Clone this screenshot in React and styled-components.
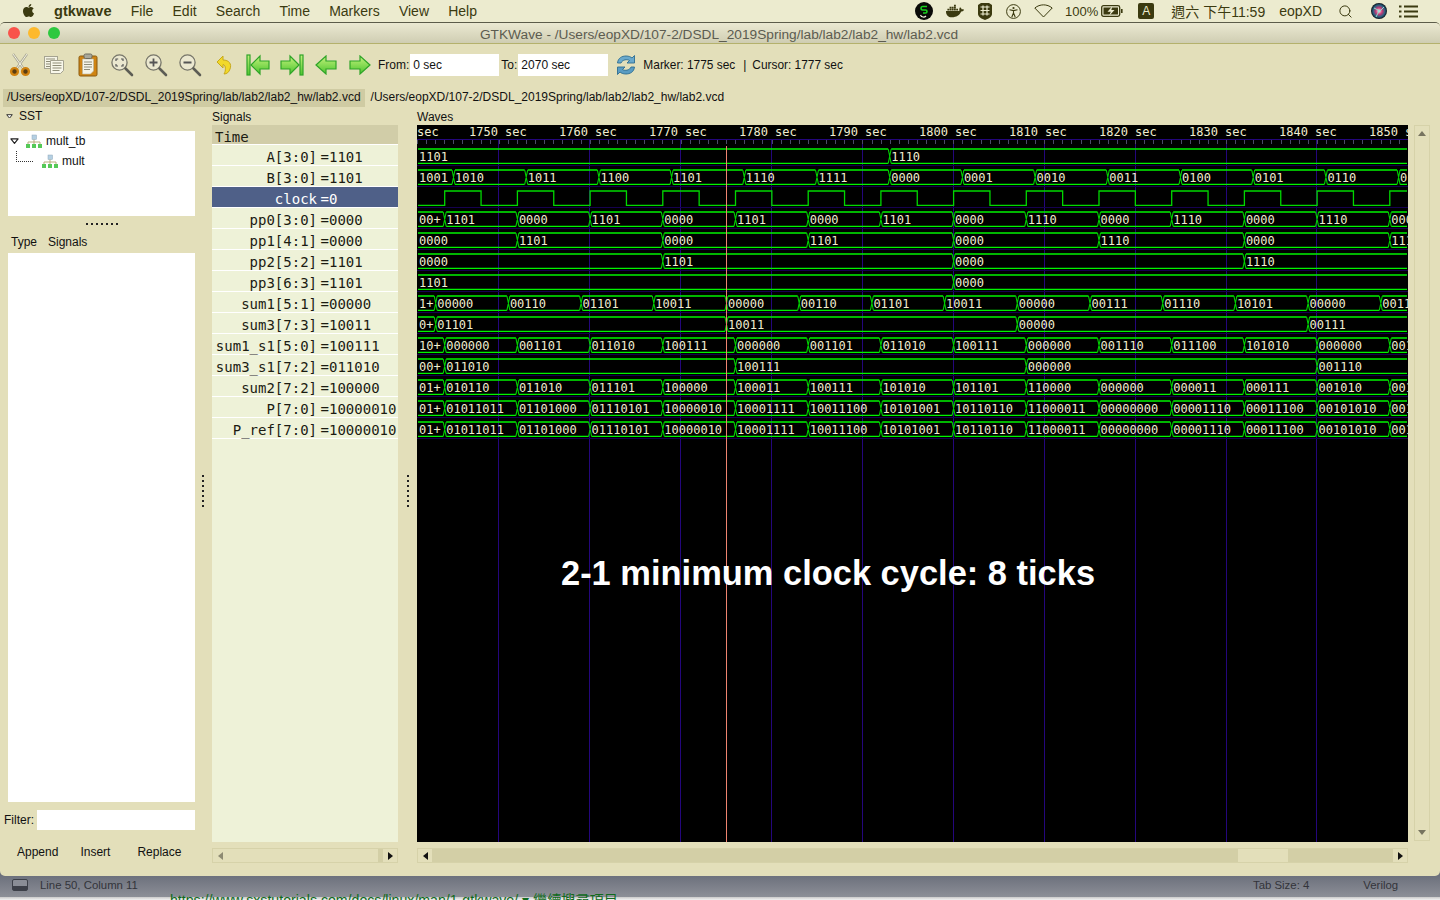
import React from 'react';
import styled, { createGlobalStyle } from 'styled-components';
import { FaApple, FaDocker } from 'react-icons/fa';
import { Search } from 'lucide-react';

const Global = createGlobalStyle`
  html, body { margin: 0; padding: 0; background: #8a8d96; }
  * { box-sizing: border-box; }
`;
const SANS = `"Liberation Sans", Arial, "Noto Sans CJK TC", sans-serif`;
const MONO = `"DejaVu Sans Mono", "Liberation Mono", monospace`;

const Screen = styled.div`
  width: 1440px; height: 900px; overflow: hidden; position: relative;
  display: flex; flex-direction: column; font-family: ${SANS}; color: #111;
  background: #ecebd0;
`;
const MenuBar = styled.div`
  height: 22px; flex: none; display: flex; align-items: center; padding-left: 21px;
  padding-right: 22px; background: #ecebcf; color: #3b3a10; font-size: 14px;
`;
const AppleMark = styled.span`display: flex; width: 33px; font-size: 15px; margin-top: -2px;`;
const MenuList = styled.div`display: flex; gap: 19.2px; align-items: center;`;
const MenuName = styled.span`font-weight: bold; font-size: 14.6px;`;
const Tray = styled.div`margin-left: auto; display: flex; align-items: center;`;
const TrayItem = styled.span`
  display: flex; align-items: center; margin-left: ${p => p.$ml || 0}px;
  font-size: ${p => p.$size || 14}px; white-space: nowrap; font-weight: ${p => p.$bold ? 500 : 400};
`;
const KeyBox = styled.span`
  width: 16px; height: 16px; border-radius: 2px; background: #3b3a10; color: #ecebcf;
  font-size: 12px; display: flex; align-items: center; justify-content: center; margin-left: 15px;
`;

const Window = styled.div`
  flex: none; height: 854px; position: relative; z-index: 1; display: flex; flex-direction: column;
  background: #e3dfba; border-radius: 5px; border-top: 1px solid #5c5c4a; overflow: hidden;
`;
const TitleBar = styled.div`
  height: 21px; flex: none; display: flex; align-items: center; position: relative; justify-content: center;
  background: linear-gradient(#ebe9d2, #cfcdb2); border-bottom: 1px solid #b4b16c;
  color: #5c5c50; font-size: 13.7px; padding: 2px 2px 0 0;
`;
const Lights = styled.div`position: absolute; left: 8px; top: 4px; display: flex; gap: 8px;`;
const Light = styled.span`width: 12px; height: 12px; border-radius: 50%; background: ${p => p.$c};`;

const Toolbar = styled.div`
  height: 42px; flex: none; display: flex; align-items: center; padding-left: 3px; font-size: 12px;
`;
const ToolBtn = styled.div`width: 34px; height: 24px; display: flex; align-items: center; justify-content: center;`;
const ToolLabel = styled.span`margin-left: ${p => p.$ml || 0}px; white-space: nowrap; display: flex; align-items: center;`;
const MarkerText = styled(ToolLabel)`font-size: 11.9px;`;
const TimeField = styled.div`
  width: ${p => p.$w}px; height: 22px; background: #fff; margin-left: ${p => p.$ml || 0}px;
  padding-left: 3px; display: flex; align-items: center;
`;
const TabRow = styled.div`height: 18px; margin-top: 3px; flex: none; display: flex; padding-left: 3px; font-size: 12px;`;
const Tab = styled.div`
  padding: 0 4px; height: 18px; line-height: 17px; margin-right: 2px; background: ${p => p.$on ? '#cfcba3' : 'transparent'};
`;

const Panes = styled.div`flex: 1; min-height: 0; display: grid; grid-template-columns: 198px 14px 186px 19px 991px 32px;`;
const LeftPane = styled.div`display: flex; flex-direction: column; min-height: 0; font-size: 12px;`;
const SstHead = styled.div`height: 24px; flex: none; display: flex; align-items: center; padding: 0 0 6px 6px; gap: 6px;`;
const TreeBox = styled.div`height: 85px; flex: none; margin-left: 8px; width: 187px; background: #fff;`;
const TreeRow = styled.div`
  height: 20px; display: flex; align-items: center; gap: 4px; padding-left: ${p => p.$indent}px;
`;
const TreeTwist = styled.span`display: flex; margin-right: 3px;`;
const TreeElbow = styled.span`
  width: 17px; height: 11px; margin-top: -9px; margin-right: 5px; flex: none;
  border-left: 1px dotted #333; border-bottom: 1px dotted #333;
`;
const GripRow = styled.div`height: 15px; flex: none; display: flex; justify-content: center; align-items: center; padding-left: 7px;`;
const HGrip = styled.span`
  width: 33px; height: 2px; background: repeating-linear-gradient(90deg, #222 0 2px, transparent 2px 5px);
`;
const TypeHead = styled.div`height: 22px; flex: none; display: flex; align-items: center; padding-left: 11px; gap: 11px;`;
const TypeList = styled.div`flex: 1; margin-left: 8px; width: 187px; background: #fff;`;
const FilterRow = styled.div`height: 20px; margin-top: 8px; flex: none; display: flex; align-items: center; padding-left: 4px;`;
const FilterInput = styled.div`width: 158px; height: 20px; margin-left: 3px; background: #fff;`;
const ActionRow = styled.div`height: 46px; flex: none; display: flex; align-items: center; padding-bottom: 2px; padding-left: 17px;`;
const ActionBtn = styled.span`margin-right: ${p => p.$mr}px;`;

const VHandle = styled.div`
  display: flex; align-items: center; justify-content: center;
  padding-left: ${p => p.$pl || 0}px; padding-right: ${p => p.$pr || 0}px;
`;
const VGrip = styled.span`
  width: 2px; height: 33px; background: repeating-linear-gradient(180deg, #222 0 2px, transparent 2px 5px);
`;
const Column = styled.div`display: flex; flex-direction: column; min-height: 0; min-width: 0;`;
const PaneTitle = styled.div`height: 18px; flex: none; display: flex; align-items: center; font-size: 12px; padding-top: 1px;`;
const SignalList = styled.div`flex: 1; min-height: 0; background: #eef2d8; font-family: ${MONO}; font-size: 14px; color: #1b1b12;`;
const TimeHead = styled.div`height: 20px; background: #d1cda8; border-bottom: 1px solid #fff; padding: 2px 0 0 3px; line-height: 20px;`;
const SignalRow = styled.div`
  height: 21px; border-bottom: 1px solid #fff; display: flex; padding-top: 2px; line-height: 21px; white-space: pre;
  background: ${p => p.$sel ? '#4f6088' : 'transparent'}; color: ${p => p.$sel ? '#fff' : 'inherit'};
`;
const SigName = styled.span`width: 105px; text-align: right; flex: none;`;
const SigEq = styled.span`width: 12px; text-align: right; flex: none;`;
const SigVal = styled.span`margin-left: 0;`;

const HScroll = styled.div`
  height: 15px; margin: 6px 0 13px; flex: none; display: flex; align-items: stretch;
  border: 1px solid #d6d2a9; background: #d3cfa6;
`;
const ArrowBtn = styled.span`
  width: 14px; flex: none; background: #e3dfba; display: flex; align-items: center; justify-content: center;
`;
const ArrowGlyph = styled.span`
  width: 0; height: 0; border-top: 4px solid transparent; border-bottom: 4px solid transparent;
  ${p => p.$left ? `border-right: 5px solid ${p.$c};` : `border-left: 5px solid ${p.$c};`}
`;
const ScrollGap = styled.span`flex: ${p => p.$grow ? 1 : 'none'}; width: ${p => p.$w || 0}px;`;
const Thumb = styled.span`background: #e3dfba; flex: ${p => p.$grow ? 1 : 'none'}; width: ${p => p.$w || 0}px;`;

const WaveBox = styled.div`flex: 1; min-height: 0; position: relative; background: #000; overflow: hidden;`;
const WaveSvg = styled.svg`display: block; font-family: ${MONO}; font-size: 12px;`;
const Caption = styled.div`
  position: absolute; left: 144px; top: 428px; color: #fff; font: bold 34.45px/40px ${SANS}; white-space: nowrap;
`;
const VScrollCol = styled.div`display: flex; flex-direction: column; padding: 18px 0 35px 6px;`;
const VScroll = styled.div`
  width: 16px; flex: 1; border: 1px solid #d6d2a9; display: flex; flex-direction: column;
  align-items: center; justify-content: space-between; padding: 5px 0;
`;
const VArrow = styled.span`
  width: 0; height: 0; border-left: 4px solid transparent; border-right: 4px solid transparent;
  ${p => p.$up ? 'border-bottom: 5px solid #77745f;' : 'border-top: 5px solid #77745f;'}
`;
const StatusBar = styled.div`
  height: 27px; margin-top: -6px; padding: 3px 0 0 12px; flex: none; display: flex; align-items: center;
  background: linear-gradient(#646875, #8c8f97); color: #33343a; font-size: 11.4px;
`;
const StatusIcon = styled.span`
  width: 16px; height: 12px; border: 1px solid #3d4049; border-radius: 2px; flex: none; margin-right: 12px;
  background: linear-gradient(#8a8d96 65%, #3d4049 65%);
`;
const StatusRight = styled.span`margin-left: ${p => p.$ml}px; white-space: nowrap;`;
const BehindStrip = styled.div`flex: 1; background: linear-gradient(#c9c9c9, #f2f2f2);`;
const BehindLink = styled.div`
  position: absolute; left: 170px; top: 889px; z-index: 2; font-size: 14.15px; color: #0f6a1c; white-space: nowrap;
`;

/* ---------- icons ---------- */
const Twist = ({ w }) => (
  <svg width={w} height={w * 0.7} viewBox="0 0 10 7">
    <path d="M1 1 H9 L5 6 Z" fill="#fff" stroke="#222" strokeWidth="1.3" strokeLinejoin="round" />
  </svg>
);
const Scissors = () => (
  <svg width="22" height="24" viewBox="0 0 22 24">
    <path d="M4 1 L14 15 M18 1 L8 15" stroke="#a9a793" strokeWidth="2.4" fill="none" />
    <path d="M4 1 L14 15 M18 1 L8 15" stroke="#f3f1e2" strokeWidth="1" fill="none" />
    <circle cx="5.5" cy="18.5" r="3.4" fill="#5a3d10" stroke="#d0820f" strokeWidth="2.4" />
    <circle cx="16.5" cy="18.5" r="3.4" fill="#5a3d10" stroke="#d0820f" strokeWidth="2.4" />
  </svg>
);
const DocLines = ({ x, y, w }) => (
  <path d={`M${x} ${y}h${w}M${x} ${y + 2.5}h${w}M${x} ${y + 5}h${w}M${x} ${y + 7.5}h${w - 2}`} stroke="#8f8d78" strokeWidth="1" />
);
const Copy = () => (
  <svg width="22" height="20" viewBox="0 0 22 20">
    <rect x="1.5" y="1.5" width="13" height="12" fill="#f5f4e6" stroke="#a5a391" />
    <DocLines x={3} y={4} w={9} />
    <path d="M7.5 5.5h13v10l-3 3h-10z" fill="#f8f7ea" stroke="#a5a391" />
    <DocLines x={9.5} y={8} w={9} />
  </svg>
);
const Paste = () => (
  <svg width="20" height="24" viewBox="0 0 20 24">
    <rect x="1" y="3" width="18" height="20" rx="1.5" fill="#cf8413" stroke="#8a5a10" />
    <path d="M4.5 6h11v12l-3 3h-8z" fill="#f5f4e8" stroke="#b8b6a0" strokeWidth=".6" />
    <DocLines x={6} y={9} w={8} />
    <rect x="6" y="1" width="8" height="4.5" rx="1.5" fill="#a9a89a" stroke="#6d6c60" />
  </svg>
);
const Glass = ({ children }) => (
  <svg width="24" height="24" viewBox="0 0 24 24">
    <circle cx="9.5" cy="9.5" r="7.6" fill="#ebe8d0" stroke="#77766a" strokeWidth="1.3" />
    <path d="M15.5 15.5 L22 22" stroke="#5d5d55" strokeWidth="2.6" strokeLinecap="round" />
    {children}
  </svg>
);
const ZoomFit = () => (
  <Glass>
    <path d="M6 8V6h2.2M11 6h2v2M13 11v2h-2M8 13H6v-2" stroke="#555" strokeWidth="1.2" fill="none" />
  </Glass>
);
const ZoomIn = () => <Glass><path d="M5.5 9.5h8M9.5 5.5v8" stroke="#555" strokeWidth="1.8" /></Glass>;
const ZoomOut = () => <Glass><path d="M5.5 9.5h8" stroke="#555" strokeWidth="1.8" /></Glass>;
const Undo = () => (
  <svg width="18" height="22" viewBox="0 0 18 22">
    <path d="M2 8 L8 2 L8 6 C14 6 17 10 15 15 C14 18 12 20 9 20 C11 17 11 11 8 10.5 L8 14 Z" fill="#f2d92a" stroke="#c7a91c" strokeWidth="1" />
  </svg>
);
const Grad = () => (
  <defs>
    <linearGradient id="greenFill" x1="0" y1="0" x2="0" y2="1">
      <stop offset="0" stopColor="#c4f27c" />
      <stop offset="1" stopColor="#4cc52e" />
    </linearGradient>
  </defs>
);
const ARROW = { fill: 'url(#greenFill)', stroke: '#2fa428', strokeWidth: 1.2 };
const ToBegin = () => (
  <svg width="24" height="22" viewBox="0 0 24 22">
    <Grad />
    <rect x="1" y="1" width="3" height="20" {...ARROW} />
    <path d="M5 11 L14 2 V7 H23 V15 H14 V20 Z" {...ARROW} />
  </svg>
);
const ToEnd = () => (
  <svg width="24" height="22" viewBox="0 0 24 22">
    <Grad />
    <rect x="20" y="1" width="3" height="20" {...ARROW} />
    <path d="M19 11 L10 2 V7 H1 V15 H10 V20 Z" {...ARROW} />
  </svg>
);
const Left = () => (
  <svg width="22" height="20" viewBox="0 0 22 20">
    <Grad />
    <path d="M1 10 L11 1 V6 H21 V14 H11 V19 Z" {...ARROW} />
  </svg>
);
const Right = () => (
  <svg width="22" height="20" viewBox="0 0 22 20">
    <Grad />
    <path d="M21 10 L11 1 V6 H1 V14 H11 V19 Z" {...ARROW} />
  </svg>
);
const Reload = () => (
  <svg width="20" height="22" viewBox="0 0 20 22">
    <path d="M1.5 9 C2 4 6 2 10 2 C13 2 15 3 16 4 L18.5 1.5 V9 H11 L13.5 6.5 C11 5 6.5 5.5 5 9 Z" fill="#6aa9cc" stroke="#2c6d92" strokeWidth=".9" />
    <path d="M18.5 13 C18 18 14 20 10 20 C7 20 5 19 4 18 L1.5 20.5 V13 H9 L6.5 15.5 C9 17 13.5 16.5 15 13 Z" fill="#5a9cc2" stroke="#2c6d92" strokeWidth=".9" />
  </svg>
);
const TreeIcon = () => (
  <svg width="16" height="15" viewBox="0 0 16 15">
    <rect x="6" y="1" width="4.5" height="4.5" fill="#b4cfe2" stroke="#8fa8ba" strokeWidth=".5" />
    <path d="M8 5.5V8M2 10V8H14V10M8 8v2" stroke="#b9ad7c" strokeWidth="1" fill="none" />
    <rect x="0" y="10" width="4" height="4" fill="#55c957" />
    <rect x="6" y="10" width="4" height="4" fill="#55c957" />
    <rect x="12" y="10" width="4" height="4" fill="#55c957" />
  </svg>
);
const SkypeMark = () => (
  <svg width="18" height="18" viewBox="0 0 18 18">
    <circle cx="9" cy="9" r="9" fill="#0a0a08" />
    <path d="M12 4.5 H7.5 C5.5 4.5 5.5 8 7.5 8 H10.5 C12.5 8 12.5 11 10.5 11 H8" stroke="#19d41e" strokeWidth="1.6" fill="none" />
    <path d="M5.5 13 C6.5 15.5 9.5 15.5 11 14" stroke="#f4f4e0" strokeWidth="1.2" fill="none" />
  </svg>
);
const ShieldGrid = () => (
  <svg width="14" height="17" viewBox="0 0 14 17">
    <path d="M0 2 L3 0 H11 L14 2 V11 C14 14 10 16 7 17 C4 16 0 14 0 11 Z" fill="#3b3a10" />
    <path d="M2.5 4h9M2.5 7.5h9M2.5 11h9M5 2.5v10M9 2.5v10" stroke="#ecebcf" strokeWidth="1.2" />
  </svg>
);
const Access = () => (
  <svg width="15" height="15" viewBox="0 0 15 15">
    <circle cx="7.5" cy="7.5" r="6.9" fill="none" stroke="#3b3a10" strokeWidth="1" />
    <circle cx="7.5" cy="4" r="1.1" fill="#3b3a10" />
    <path d="M3.5 5.8 L7.5 6.6 L11.5 5.8 M7.5 6.6 V9 M5.8 13 L7.5 9 L9.2 13" stroke="#3b3a10" strokeWidth="1.1" fill="none" />
  </svg>
);
const Wifi = () => (
  <svg width="19" height="14" viewBox="0 0 19 14">
    <path d="M0.8 4 C6 -0.2 13 -0.2 18.2 4 L9.5 13 Z" fill="none" stroke="#3b3a10" strokeWidth="1" strokeLinejoin="round" />
  </svg>
);
const Battery = () => (
  <svg width="22" height="12" viewBox="0 0 22 12">
    <rect x=".7" y=".7" width="18" height="10.6" rx="1.8" fill="none" stroke="#3b3a10" strokeWidth="1.3" />
    <rect x="2.5" y="2.5" width="14.5" height="7" fill="#3b3a10" />
    <path d="M11.5 1 L6.5 6.8 H9.8 L8 11 L13.5 5 H10.3 Z" fill="#ecebcf" />
    <rect x="20" y="4" width="1.6" height="4" fill="#3b3a10" />
  </svg>
);
const Siri = () => (
  <svg width="16" height="16" viewBox="0 0 16 16">
    <defs>
      <radialGradient id="siriGlow" cx=".5" cy=".5" r=".5">
        <stop offset="0" stopColor="#f4f4f4" />
        <stop offset=".4" stopColor="#c83a78" />
        <stop offset=".75" stopColor="#25607f" />
        <stop offset="1" stopColor="#0c0c14" />
      </radialGradient>
    </defs>
    <circle cx="8" cy="8" r="8" fill="url(#siriGlow)" />
    <path d="M3 5 L9 8 L13 4 M8 8 L5 14" stroke="#8ce0d0" strokeWidth="1" fill="none" />
  </svg>
);
const ListMark = () => (
  <svg width="19" height="13" viewBox="0 0 19 13">
    <path d="M0 1.5h2.5M0 6.5h2.5M0 11.5h2.5M5 1.5h14M5 6.5h14M5 11.5h14" stroke="#3b3a10" strokeWidth="2" />
  </svg>
);

/* ---------- wave data ---------- */
const STEP = 72.7;
const PA = 444.7, PB = 453.5, PC = 435.7;
const at = (base, k) => base + STEP * k;
const run = (base, first, labels) => [[null, first], ...labels.map((l, i) => [at(base, i), l])];
const pick = (base, first, pairs) => [[null, first], ...pairs.map(([k, l]) => [at(base, k), l])];

const PVALS = ['01011011', '01101000', '01110101', '10000010', '10001111', '10011100', '10101001', '10110110', '11000011', '00000000', '00001110', '00011100', '00101010', '001'];

const ROWS = [
  { name: 'A[3:0]', val: '1101', segs: pick(PB, '1101', [[6, '1110']]) },
  { name: 'B[3:0]', val: '1101', segs: run(PB, '1001', ['1010', '1011', '1100', '1101', '1110', '1111', '0000', '0001', '0010', '0011', '0100', '0101', '0110', '0']) },
  { name: 'clock', val: '0', sel: true, clock: true },
  { name: 'pp0[3:0]', val: '0000', segs: run(PA, '00+', ['1101', '0000', '1101', '0000', '1101', '0000', '1101', '0000', '1110', '0000', '1110', '0000', '1110', '000']) },
  { name: 'pp1[4:1]', val: '0000', segs: pick(PA, '0000', [[1, '1101'], [3, '0000'], [5, '1101'], [7, '0000'], [9, '1110'], [11, '0000'], [13, '111']]) },
  { name: 'pp2[5:2]', val: '1101', segs: pick(PA, '0000', [[3, '1101'], [7, '0000'], [11, '1110']]) },
  { name: 'pp3[6:3]', val: '1101', segs: pick(PA, '1101', [[7, '0000']]) },
  { name: 'sum1[5:1]', val: '00000', segs: run(PC, '1+', ['00000', '00110', '01101', '10011', '00000', '00110', '01101', '10011', '00000', '00111', '01110', '10101', '00000', '0011']) },
  { name: 'sum3[7:3]', val: '10011', segs: pick(PC, '0+', [[0, '01101'], [4, '10011'], [8, '00000'], [12, '00111']]) },
  { name: 'sum1_s1[5:0]', val: '100111', segs: run(PA, '10+', ['000000', '001101', '011010', '100111', '000000', '001101', '011010', '100111', '000000', '001110', '011100', '101010', '000000', '001']) },
  { name: 'sum3_s1[7:2]', val: '011010', segs: pick(PA, '00+', [[0, '011010'], [4, '100111'], [8, '000000'], [12, '001110']]) },
  { name: 'sum2[7:2]', val: '100000', segs: run(PA, '01+', ['010110', '011010', '011101', '100000', '100011', '100111', '101010', '101101', '110000', '000000', '000011', '000111', '001010', '001']) },
  { name: 'P[7:0]', val: '10000010', segs: run(PA, '01+', PVALS) },
  { name: 'P_ref[7:0]', val: '10000010', segs: run(PA, '01+', PVALS) },
];

const GREEN = '#00f400';
const X0 = 418, X1 = 1407;
const rowTop = i => 149 + 21 * i;

function BusRow({ segs, i }) {
  const top = rowTop(i), bot = top + 14.4;
  const xs = segs.slice(1).map(s => s[0]);
  const h = [];
  let from = X0;
  xs.forEach(x => { h.push(`M${from} ${top}H${x - 1.5}M${from} ${bot}H${x - 1.5}`); from = x + 1.5; });
  h.push(`M${from} ${top}H${X1}M${from} ${bot}H${X1}`);
  const cross = xs.map(x => `M${x - 1.5} ${top}L${x + 1.5} ${bot}M${x - 1.5} ${bot}L${x + 1.5} ${top}`).join('');
  return (
    <g>
      <path d={h.join('')} stroke={GREEN} strokeWidth="1.3" fill="none" />
      <path d={cross} stroke="#00d000" strokeWidth="1.1" fill="none" />
      {segs.map(([x, l], n) => (
        <text key={n} x={x === null ? 419 : x + 1.5} y={top + 12} fill="#f1eed0">{l}</text>
      ))}
    </g>
  );
}
function ClockRow({ i }) {
  const top = rowTop(i), bot = top + 14.4;
  let d = `M${X0} ${bot}`;
  let high = false;
  for (let k = 0; k < 27; k++) {
    const x = 444.7 + 36.35 * k;
    d += `H${x}V${high ? bot : top}`;
    high = !high;
  }
  d += `H${X1}`;
  return <path d={d} stroke="#00d800" strokeWidth="1.3" fill="none" />;
}

const GRID = Array.from({ length: 10 }, (_, k) => Math.round(498.3 + 90.9 * k) + 0.5);
const LABELS = Array.from({ length: 11 }, (_, k) => ({ x: 469 + 90 * k, t: 1750 + 10 * k }));
const TICKS = Array.from({ length: 110 }, (_, k) => Math.round(417 + 9.09 * k) + 0.5);

function Waves() {
  return (
    <WaveSvg width="991" height="717" viewBox="417 125 991 717">
      <path d={GRID.map(x => `M${x} 139V842`).join('')} stroke="#24067c" shapeRendering="crispEdges" />
      <path d={Array.from({ length: 14 }, (_, k) => `M417 ${165.5 + 21 * k}H1408`).join('')} stroke="#150050" shapeRendering="crispEdges" />
      <path d="M417 139.5H1408" stroke="#24067c" shapeRendering="crispEdges" />
      <path d={TICKS.map(x => `M${x} 140V144`).join('')} stroke="#4b4a68" shapeRendering="crispEdges" />
      <text x="417" y="136" fill="#f1eed0">sec</text>
      {LABELS.map(l => (
        <text key={l.t} x={l.x} y="136" fill="#f1eed0" xmlSpace="preserve">{`${l.t} sec`}</text>
      ))}
      {ROWS.map((r, i) => (r.clock ? <ClockRow key={r.name} i={i} /> : <BusRow key={r.name} i={i} segs={r.segs} />))}
      <path d="M726.5 146V842" stroke="#ee8470" shapeRendering="crispEdges" />
    </WaveSvg>
  );
}

export default function App() {
  return (
    <Screen>
      <Global />
      <MenuBar>
        <AppleMark><FaApple /></AppleMark>
        <MenuList>
          <MenuName>gtkwave</MenuName>
          {['File', 'Edit', 'Search', 'Time', 'Markers', 'View', 'Help'].map(m => <span key={m}>{m}</span>)}
        </MenuList>
        <Tray>
          <TrayItem><SkypeMark /></TrayItem>
          <TrayItem $ml={13}><FaDocker size={18} /></TrayItem>
          <TrayItem $ml={14}><ShieldGrid /></TrayItem>
          <TrayItem $ml={14}><Access /></TrayItem>
          <TrayItem $ml={13}><Wifi /></TrayItem>
          <TrayItem $ml={12} $size={13}>100%</TrayItem>
          <TrayItem $ml={3}><Battery /></TrayItem>
          <KeyBox>A</KeyBox>
          <TrayItem $ml={17}>週六 下午11:59</TrayItem>
          <TrayItem $ml={14} $bold>eopXD</TrayItem>
          <TrayItem $ml={16}><Search size={15} strokeWidth={1.6} /></TrayItem>
          <TrayItem $ml={18}><Siri /></TrayItem>
          <TrayItem $ml={12}><ListMark /></TrayItem>
        </Tray>
      </MenuBar>
      <Window>
        <TitleBar>
          <Lights>
            <Light $c="#f9534b" />
            <Light $c="#fdb92d" />
            <Light $c="#2dc83f" />
          </Lights>
          GTKWave - /Users/eopXD/107-2/DSDL_2019Spring/lab/lab2/lab2_hw/lab2.vcd
        </TitleBar>
        <Toolbar>
          <ToolBtn><Scissors /></ToolBtn>
          <ToolBtn><Copy /></ToolBtn>
          <ToolBtn><Paste /></ToolBtn>
          <ToolBtn><ZoomFit /></ToolBtn>
          <ToolBtn><ZoomIn /></ToolBtn>
          <ToolBtn><ZoomOut /></ToolBtn>
          <ToolBtn><Undo /></ToolBtn>
          <ToolBtn><ToBegin /></ToolBtn>
          <ToolBtn><ToEnd /></ToolBtn>
          <ToolBtn><Left /></ToolBtn>
          <ToolBtn><Right /></ToolBtn>
          <ToolLabel $ml={1}>From:</ToolLabel>
          <TimeField $w={89} $ml={1}>0 sec</TimeField>
          <ToolLabel $ml={2}>To:</ToolLabel>
          <TimeField $w={90} $ml={1}>2070 sec</TimeField>
          <ToolLabel $ml={8}><Reload /></ToolLabel>
          <MarkerText $ml={7}>Marker: 1775 sec</MarkerText>
          <MarkerText $ml={8}>|</MarkerText>
          <MarkerText $ml={6}>Cursor: 1777 sec</MarkerText>
        </Toolbar>
        <TabRow>
          <Tab $on>/Users/eopXD/107-2/DSDL_2019Spring/lab/lab2/lab2_hw/lab2.vcd</Tab>
          <Tab>/Users/eopXD/107-2/DSDL_2019Spring/lab/lab2/lab2_hw/lab2.vcd</Tab>
        </TabRow>
        <Panes>
          <LeftPane>
            <SstHead><Twist w={7} />SST</SstHead>
            <TreeBox>
              <TreeRow $indent={2}>
                <TreeTwist><Twist w={9} /></TreeTwist>
                <TreeIcon />
                mult_tb
              </TreeRow>
              <TreeRow $indent={8}>
                <TreeElbow />
                <TreeIcon />
                mult
              </TreeRow>
            </TreeBox>
            <GripRow><HGrip /></GripRow>
            <TypeHead><span>Type</span><span>Signals</span></TypeHead>
            <TypeList />
            <FilterRow>Filter:<FilterInput /></FilterRow>
            <ActionRow>
              <ActionBtn $mr={22}>Append</ActionBtn>
              <ActionBtn $mr={27}>Insert</ActionBtn>
              <ActionBtn $mr={0}>Replace</ActionBtn>
            </ActionRow>
          </LeftPane>
          <VHandle $pr={4}><VGrip /></VHandle>
          <Column>
            <PaneTitle>Signals</PaneTitle>
            <SignalList>
              <TimeHead>Time</TimeHead>
              {ROWS.map(r => (
                <SignalRow key={r.name} $sel={r.sel}>
                  <SigName>{r.name}</SigName>
                  <SigEq>=</SigEq>
                  <SigVal>{r.val}</SigVal>
                </SignalRow>
              ))}
            </SignalList>
            <HScroll>
              <ArrowBtn><ArrowGlyph $left $c="#8d8a72" /></ArrowBtn>
              <Thumb $grow />
              <ScrollGap $w={5} />
              <ArrowBtn><ArrowGlyph $c="#111" /></ArrowBtn>
            </HScroll>
          </Column>
          <VHandle $pl={1}><VGrip /></VHandle>
          <Column>
            <PaneTitle>Waves</PaneTitle>
            <WaveBox>
              <Waves />
              <Caption>2-1 minimum clock cycle: 8 ticks</Caption>
            </WaveBox>
            <HScroll>
              <ArrowBtn><ArrowGlyph $left $c="#111" /></ArrowBtn>
              <ScrollGap $grow />
              <Thumb $w={50} />
              <ScrollGap $w={105} />
              <ArrowBtn><ArrowGlyph $c="#111" /></ArrowBtn>
            </HScroll>
          </Column>
          <VScrollCol>
            <VScroll>
              <VArrow $up />
              <VArrow />
            </VScroll>
          </VScrollCol>
        </Panes>
      </Window>
      <StatusBar>
        <StatusIcon />
        Line 50, Column 11
        <StatusRight $ml={1115}>Tab Size: 4</StatusRight>
        <StatusRight $ml={54}>Verilog</StatusRight>
      </StatusBar>
      <BehindStrip />
      <BehindLink>https://www.sxstutorials.com/docs/linux/man/1-gtkwave/ ▾ 繼續搜尋項目</BehindLink>
    </Screen>
  );
}
